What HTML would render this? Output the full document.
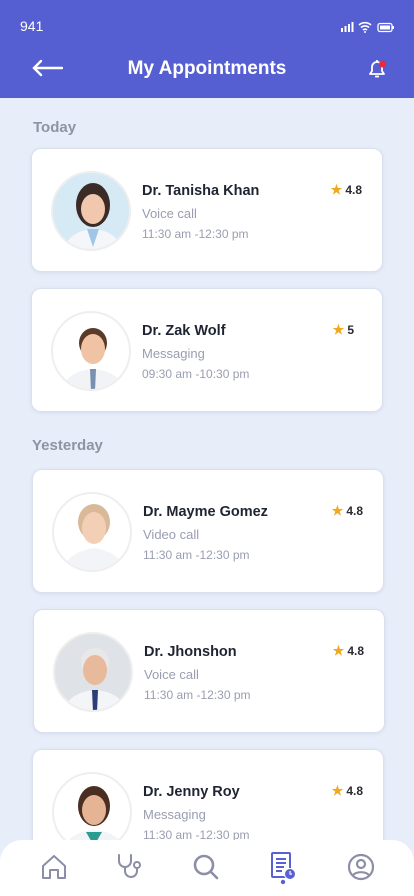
<!DOCTYPE html>
<html><head><meta charset="utf-8"><style>
*{margin:0;padding:0;box-sizing:border-box}
body{width:414px;height:896px;overflow:hidden;background:#e8eef9;font-family:"Liberation Sans",sans-serif;position:relative}
.hdr{position:absolute;left:0;top:0;width:414px;height:98px;background:#565fd2;color:#fff}
.sec{position:absolute;left:33px;font-size:15px;font-weight:bold;color:#8f93a3}
.card{position:absolute;width:352px;height:124px;background:#fff;border-radius:10px;border:1px solid #d9e0ee;box-shadow:0 1px 4px rgba(80,90,140,.12)}
.av{position:absolute;left:19px;top:22px;width:80px;height:80px;border-radius:50%;border:2px solid #eee;overflow:hidden}
.nm{position:absolute;left:110px;top:34px;font-size:14.5px;font-weight:bold;color:#1f2433}
.ty{position:absolute;left:110px;top:57px;font-size:13px;color:#9a9db0}
.tm{position:absolute;left:110px;top:78px;font-size:12px;color:#9a9db0}
.rt{position:absolute;right:20px;top:33px;font-size:12px;font-weight:bold;color:#2a2a33}
.rt b{color:#f2a81d;font-size:13px;margin-right:3px}
.nav{position:absolute;left:0;top:840px;width:414px;height:56px;background:#fff;border-radius:22px 22px 0 0}
</style></head><body>
<div class="hdr">
<div style="position:absolute;left:20px;top:18px;font-size:14px">941</div>
<svg style="position:absolute;left:340px;top:20px" width="55" height="14" viewBox="0 0 55 14"><rect x="1" y="8" width="2" height="4" fill="#fff"/><rect x="4.5" y="6" width="2" height="6" fill="#fff"/><rect x="8" y="4" width="2" height="8" fill="#fff"/><rect x="11.5" y="2" width="2" height="10" fill="#fff"/><path d="M19 5a9 9 0 0 1 12 0M21 7.5a6 6 0 0 1 8 0M23 10a3 3 0 0 1 4 0" stroke="#fff" stroke-width="1.6" fill="none"/><circle cx="25" cy="12" r="1" fill="#fff"/><rect x="38" y="3.5" width="14" height="8" rx="2" stroke="#fff" stroke-width="1.3" fill="none"/><rect x="40" y="5.5" width="10" height="4" fill="#fff"/><rect x="52.5" y="6" width="1.5" height="3" fill="#fff"/></svg>
<svg style="position:absolute;left:31px;top:59px" width="32" height="18" viewBox="0 0 32 18"><path d="M31 9H3M10 2L3 9l7 7" stroke="#fff" stroke-width="2.4" fill="none" stroke-linecap="round"/></svg>
<div style="position:absolute;left:0;width:414px;top:58px;text-align:center;font-size:19px;font-weight:bold">My Appointments</div>
<svg style="position:absolute;left:366px;top:58px" width="24" height="22" viewBox="0 0 24 22"><path d="M4 16h14l-2-3V9a5 5 0 0 0-10 0v4z" stroke="#fff" stroke-width="1.8" fill="none" stroke-linejoin="round"/><path d="M9 18.5h4" stroke="#fff" stroke-width="1.8"/><path d="M11 2v2" stroke="#fff" stroke-width="1.8"/><circle cx="16.5" cy="6" r="3.5" fill="#f0263a"/></svg>
</div>

<div class="sec" style="top:119px">Today</div>
<div class="sec" style="top:437px;left:32px">Yesterday</div>

<div class="card" style="left:31px;top:148px">
<div class="av" style="background:#d6eaf6"><svg width="80" height="80" viewBox="0 0 80 80"><ellipse cx="40" cy="32" rx="17" ry="22" fill="#3a2b26"/><ellipse cx="40" cy="36" rx="12" ry="15" fill="#f1c7ae"/><path d="M10 80q4-22 30-24q26 2 30 24z" fill="#f4f6f9"/><path d="M34 56l6 18l6-18z" fill="#9fc6e6"/></svg></div>
<div class="nm">Dr. Tanisha Khan</div><div class="ty">Voice call</div><div class="tm">11:30 am -12:30 pm</div><div class="rt"><b>★</b>4.8</div></div>

<div class="card" style="left:31px;top:288px">
<div class="av" style="background:#fff"><svg width="80" height="80" viewBox="0 0 80 80"><ellipse cx="40" cy="30" rx="14" ry="15" fill="#5a3a28"/><ellipse cx="40" cy="36" rx="12" ry="15" fill="#f0c3a4"/><path d="M8 80q4-22 32-24q28 2 32 24z" fill="#f2f3f6"/><path d="M37 56h6l-1 22h-4z" fill="#7b8fb0"/></svg></div>
<div class="nm">Dr. Zak Wolf</div><div class="ty">Messaging</div><div class="tm">09:30 am -10:30 pm</div><div class="rt" style="right:28px"><b>★</b>5</div></div>

<div class="card" style="left:32px;top:469px">
<div class="av" style="background:#fff"><svg width="80" height="80" viewBox="0 0 80 80"><ellipse cx="40" cy="28" rx="16" ry="18" fill="#d9b99a"/><ellipse cx="40" cy="34" rx="12" ry="16" fill="#f3cfb6"/><path d="M8 80q4-22 32-26q28 4 32 26z" fill="#f3f4f7"/></svg></div>
<div class="nm">Dr. Mayme Gomez</div><div class="ty">Video call</div><div class="tm">11:30 am -12:30 pm</div><div class="rt"><b>★</b>4.8</div></div>

<div class="card" style="left:33px;top:609px">
<div class="av" style="background:#dfe3e8"><svg width="80" height="80" viewBox="0 0 80 80"><ellipse cx="40" cy="28" rx="14" ry="14" fill="#e8e8e8"/><ellipse cx="40" cy="36" rx="12" ry="15" fill="#e9b99c"/><path d="M8 80q4-22 32-24q28 2 32 24z" fill="#f4f5f8"/><path d="M37 56h6l-1 22h-4z" fill="#2c3e78"/></svg></div>
<div class="nm">Dr. Jhonshon</div><div class="ty">Voice call</div><div class="tm">11:30 am -12:30 pm</div><div class="rt"><b>★</b>4.8</div></div>

<div class="card" style="left:32px;top:749px">
<div class="av" style="background:#fff"><svg width="80" height="80" viewBox="0 0 80 80"><ellipse cx="40" cy="32" rx="16" ry="20" fill="#4a2e22"/><ellipse cx="40" cy="36" rx="12" ry="15" fill="#e5b494"/><path d="M8 80q4-22 32-24q28 2 32 24z" fill="#f3f4f7"/><path d="M32 58l8 14l8-14z" fill="#2a9d8f"/></svg></div>
<div class="nm">Dr. Jenny Roy</div><div class="ty">Messaging</div><div class="tm">11:30 am -12:30 pm</div><div class="rt"><b>★</b>4.8</div></div>

<div class="nav">
<svg style="position:absolute;left:41px;top:14px" width="26" height="26" viewBox="0 0 26 26"><path d="M2 12L13 2l11 10v12h-7v-8H9v8H2z" stroke="#8c8ea8" stroke-width="2" fill="none" stroke-linejoin="round"/></svg>
<svg style="position:absolute;left:116px;top:13px" width="26" height="28" viewBox="0 0 26 28"><path d="M3 2v6a6 6 0 0 0 12 0V2M9 14v4a6 6 0 0 0 12 0v-2" stroke="#8c8ea8" stroke-width="2" fill="none" stroke-linecap="round"/><circle cx="21" cy="12" r="3" stroke="#8c8ea8" stroke-width="2" fill="none"/></svg>
<svg style="position:absolute;left:192px;top:13px" width="28" height="28" viewBox="0 0 28 28"><circle cx="12" cy="12" r="9" stroke="#8c8ea8" stroke-width="2.6" fill="none"/><path d="M19 19l6 6" stroke="#8c8ea8" stroke-width="2.6" stroke-linecap="round"/></svg>
<svg style="position:absolute;left:270px;top:11px" width="28" height="34" viewBox="0 0 28 34"><rect x="2" y="2" width="18" height="24" rx="1" fill="none" stroke="#5860d4" stroke-width="2"/><path d="M6 8h10M6 12h10M6 16h8M6 20h6" stroke="#5860d4" stroke-width="2"/><circle cx="20" cy="23" r="5.5" fill="#5860d4" stroke="#fff" stroke-width="1"/><path d="M20 20v3h2" stroke="#fff" stroke-width="1.2" fill="none"/><circle cx="13" cy="31" r="2.2" fill="#5860d4"/></svg>
<svg style="position:absolute;left:347px;top:13px" width="28" height="28" viewBox="0 0 28 28"><circle cx="14" cy="14" r="12" stroke="#8c8ea8" stroke-width="2.2" fill="none"/><circle cx="14" cy="11" r="4" stroke="#8c8ea8" stroke-width="2.2" fill="none"/><path d="M6 22a10 7 0 0 1 16 0" stroke="#8c8ea8" stroke-width="2.2" fill="none"/></svg>
</div>
</body></html>
